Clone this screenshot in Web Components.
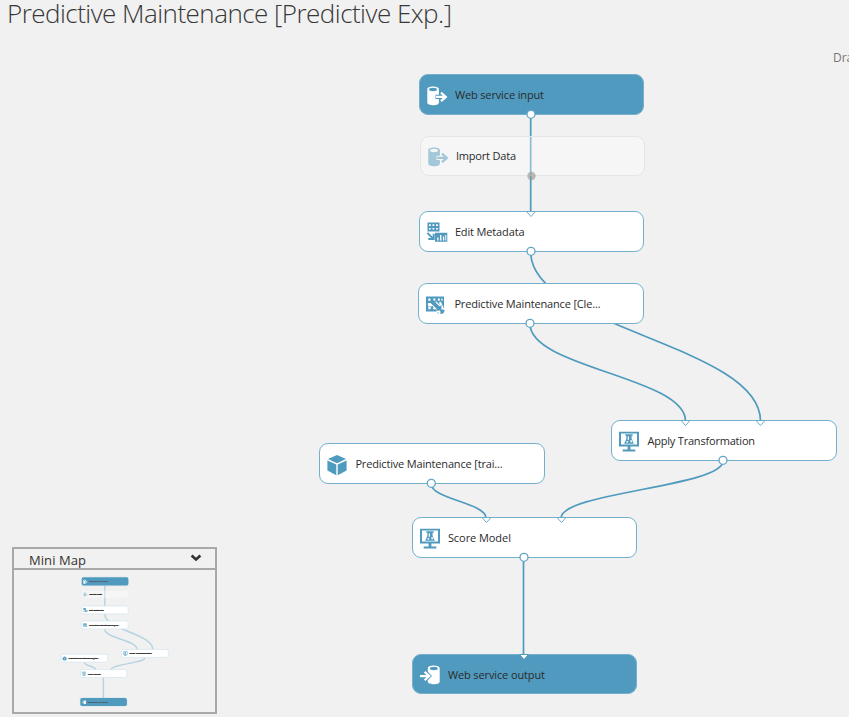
<!DOCTYPE html>
<html lang="en">
<head>
<meta charset="utf-8">
<title>Predictive Maintenance [Predictive Exp.]</title>
<style>
html,body{margin:0;height:100%;overflow:hidden;background:#f1f1f1}
</style>
</head>
<body>
<experiment-page></experiment-page>
<script>
const FONT = '"Segoe UI","Open Sans","Noto Sans",sans-serif';
const BLUE = '#4f9abe';

const ICONS = {
  input: `<path fill="currentColor" d="M.3 3.200C.3 1.500 2.900.6 6 .6s5.900.9 5.900 2.600V8.700H8.500v4.400h3.400v3.700c0 1.600-2.600 2.500-5.900 2.500S.3 18.400.3 16.800z"/><ellipse cx="6" cy="3.500" rx="4" ry="1.700" fill="var(--hole)"/><path d="M9 10.900h9.500M14 6.700l4.800 4.200-4.800 4.200" fill="none" stroke="currentColor" stroke-width="2.200"/>`,
  output: `<path fill="currentColor" d="M7.800 3.200C7.800 1.500 10.400.6 13.800.6s5.900.9 5.900 2.600v13.600c0 1.600-2.600 2.500-5.900 2.500s-6-.9-6-2.500v-1.500l4.200-4.200-4.200-4.300z"/><ellipse cx="13.800" cy="3.500" rx="4" ry="1.700" fill="var(--hole)"/><path d="M0 11.100h9M4.600 6.900l4.700 4.200-4.700 4.200" fill="none" stroke="currentColor" stroke-width="2.200"/>`,
  metadata: `<path fill="currentColor" d="M.5.6h12v9H.5zM8 10.800h12.300v9H8z"/><path fill="#fff" d="M2 2.200h1.800v1.700H2zm3.500 0h1.800v1.700H5.500zm3.500 0h1.800v1.700H9zM2 5.900h1.800v1.700H2zm3.500 0h1.800v1.700H5.500zm3.500 0h1.800v1.700H9zM10.200 15.500h1.300v3h-1.300zm2.800-2.600h1.400v5.600H13zm2.900 1.600h1.300v4h-1.300zm2.400-1.600h1v5.600h-1z"/><path d="M.4 10.900l5.400 5.500M6.700 11.800v5.300H1.300" fill="none" stroke="currentColor" stroke-width="2"/>`,
  clean: `<path fill="currentColor" d="M0 1.500h18v15H0z"/><path fill="#fff" d="M2.300 3.500h2.200v2.200H2.300zm5 0h2v2.200h-2zm4.500 0h2v2.200h-2zm3.500 0h1.200v2.200h-1.200zM2.300 12h2.400v2.300H2.300zm4.700.5h2v1.800H7zM2 8h3l2.400 2.400-2 1H2zM13 7.600l1.800-.8 1.500 3.200-2.300.8z"/><path d="M8 8.200L15 15.600" stroke="#fff" stroke-width="6"/><path d="M5.300 5.800L13.500 14" stroke="currentColor" stroke-width="3.800"/><circle cx="14.500" cy="15" r="4" fill="currentColor"/><path d="M16.300 10.500v3.200l2.900.1M10.500 16.600l2.900-.2.200 3.200" fill="none" stroke="#fff" stroke-width="1.800"/>`,
  monitor: `<path fill="currentColor" fill-rule="evenodd" d="M0 .7h20v14.800h-8.600v3.100h4.900v2H3.700v-2h4.900v-3.100H0zM2 2.600v10.900h16V2.600z"/><path fill="currentColor" d="M6.300 3.200h7.400v1.500h-1.100v3l2.200 5H5.200l2.200-5v-3H6.300z"/><path fill="#fff" d="M9 5.200h1v3.500H8.600zm2.400 3.700h1.100l.9 2.300h-2zM7.700 9.900h1.500v1.500H7.200z"/>`,
  cube: `<path fill="currentColor" d="M10 0l9 4.100-9 4.200L1 4.100zM.4 5.500l8.900 4.100v10.700L.4 15.500zM19.600 5.500l-8.900 4.100v10.700l8.900-4.800z"/>`
};

const NODES = [
  {x:418.500,y:74.200,label:'Web service input',w:89,icon:'input',kind:'service',outs:[112],iy:1},
  {x:419.500,y:135.700,label:'Import Data',w:60,icon:'input',kind:'ghost',outs:[111.500],iy:1},
  {x:418.500,y:211,label:'Edit Metadata',w:69.500,ty:1,icon:'metadata',ins:[112],outs:[112],iy:1},
  {x:418,y:283.300,label:'Predictive Maintenance [Cle...',w:146,icon:'clean',outs:[112],iy:1},
  {x:611,y:420,label:'Apply Transformation',w:107.500,ty:1,icon:'monitor',ins:[74.500,149.500],outs:[112],iy:1},
  {x:319,y:443.300,label:'Predictive Maintenance [trai...',w:147,icon:'cube',outs:[112.300],iy:1},
  {x:411.500,y:517,label:'Score Model',mini:'Train Model',w:63,ty:1,icon:'monitor',ins:[74.500,149.500],outs:[112],iy:1},
  {x:411.500,y:653.800,label:'Web service output',w:97,ty:1,icon:'output',kind:'service',ins:[112],iy:1}
];
const EDGES = [
  [530.7,115,530.7,212],[530.7,252,760.500,421],[530,324,685.500,421],
  [723,461,561,518],[431.300,484,486,518],[523.500,558,523.500,655]
];

class FitText extends HTMLElement {
  connectedCallback() {
    this.attachShadow({mode:'open'}).innerHTML =
      `<style>:host{display:inline-block;white-space:pre}span{display:inline-block}</style><span><slot></slot></span>`;
    const span = this.shadowRoot.querySelector('span');
    const scale = +this.getAttribute('scale') || 1;
    const natural = span.getBoundingClientRect().width / scale;
    span.style.letterSpacing = (+this.getAttribute('width') - natural) / this.textContent.length + 'px';
  }
}
customElements.define('fit-text', FitText);

class ModuleNode extends HTMLElement {
  connectedCallback() {
    const n = NODES[+this.getAttribute('index')];
    const mini = this.hasAttribute('mini');
    const ghost = n.kind === 'ghost', service = n.kind === 'service';
    this.style.left = n.x + 'px';
    this.style.top = n.y + 'px';
    const port = x => ghost
      ? `<circle cx="${x}" cy="40" r="4.200" fill="#999" fill-opacity=".65"/>`
      : `<circle cx="${x}" cy="40.300" r="4" fill="#fff" stroke="#62a5c5" stroke-width="1.300"/>`;
    const arrow = x => `<path d="M${x-4.500} .5h9l-4.500 5z" fill="#fff" stroke="${service ? BLUE : '#6aaac9'}" stroke-width="1"/>`;
    this.attachShadow({mode:'open'}).innerHTML = `<style>
      :host{position:absolute;display:block;width:225.500px;height:40.700px;
        --hole:${service ? BLUE : '#f5f5f5'}}
      .box{box-sizing:border-box;width:100%;height:100%;display:flex;align-items:center;
        padding-left:7.400px;border-radius:9px;
        border:${mini && !service && !ghost ? '3px solid #cde3ee' : `1px solid ${ghost ? '#e5e5e5' : '#74afcc'}`};
        ${mini && !service && !ghost ? 'padding-left:5.400px;' : ''}
        background:${service ? BLUE : ghost ? 'rgba(255,255,255,.35)' : '#fff'}}
      .icon{width:20px;height:21px;flex:none;margin-top:${2 + (n.iy||0)}px;overflow:visible;
        color:${service ? '#fff' : BLUE};opacity:${ghost ? .5 : 1}}
      fit-text{margin-left:8px;position:relative;top:${n.ty||0}px;font:${mini ? 700 : 400} 11px/16px ${FONT};
        color:${service && mini ? '#493f3c' : '#2b2b2b'};${mini ? `-webkit-text-stroke:${service ? .4 : 1.200}px ${service ? '#64585a' : '#222'}` : ''}}
      .ports{position:absolute;left:0;top:0;width:100%;height:100%;overflow:visible}
    </style>
    <div class="box"><svg class="icon" viewBox="0 0 20 21">${ICONS[n.icon]}</svg>
    <fit-text width="${n.w}" scale="${mini ? .208 : 1}">${mini && n.mini || n.label}</fit-text></div>
    <svg class="ports">${mini ? '' : (n.outs||[]).map(port).join('') + (n.ins||[]).map(arrow).join('')}</svg>`;
  }
}
customElements.define('module-node', ModuleNode);

class ExperimentGraph extends HTMLElement {
  connectedCallback() {
    const mini = this.hasAttribute('mini');
    const paths = EDGES.map(([a,b,c,d]) => {
      const k = (d - b) * .45;
      return `<path d="M${a} ${b}C${a} ${b+k} ${c} ${d-k} ${c} ${d}"/>`;
    }).join('');
    this.attachShadow({mode:'open'}).innerHTML = `<style>
      :host{display:block;position:relative;width:849px;height:717px}
      .edges{position:absolute;inset:0;width:849px;height:717px;fill:none;
        stroke:${mini ? '#b5d3e1' : BLUE};stroke-width:${mini ? 7 : 1.700}}
    </style><svg class="edges">${paths}</svg>` +
    NODES.map((n,i) => `<module-node index="${i}" ${mini ? 'mini' : ''}></module-node>`).join('');
  }
}
customElements.define('experiment-graph', ExperimentGraph);

class MiniMap extends HTMLElement {
  connectedCallback() {
    this.attachShadow({mode:'open'}).innerHTML = `<style>
      :host{display:flex;flex-direction:column;box-sizing:border-box;width:205px;height:167px;
        border:2px solid #a9a9a9;background:#f1f1f1;overflow:hidden}
      header{flex:none;display:flex;align-items:center;justify-content:space-between;height:19px;
        padding:0 13px 0 15px;border-bottom:2px solid #a9a9a9;font:13px/18px ${FONT};color:#333}
      header svg{width:12px;height:8px;margin-top:-1px}
      fit-text{margin-top:2px}
      .view{flex:1;overflow:hidden;position:relative}
      experiment-graph{transform-origin:0 0;transform:translate(-19.500px,-8.200px) scale(.208)}
    </style>
    <header><fit-text width="57">Mini Map</fit-text>
    <svg viewBox="0 0 12 8"><path d="M1.600 1.500l4.400 3.900 4.400-3.900" fill="none" stroke="#333" stroke-width="2.700"/></svg></header>
    <div class="view"><experiment-graph mini></experiment-graph></div>`;
  }
}
customElements.define('mini-map', MiniMap);

class ExperimentPage extends HTMLElement {
  connectedCallback() {
    this.attachShadow({mode:'open'}).innerHTML = `<style>
      :host{display:block;position:relative;width:849px;height:717px;overflow:hidden;background:#f1f1f1;font-family:${FONT}}
      h1{position:absolute;left:7px;top:0;margin:0;font:300 26px/26px ${FONT};color:#383838}
      .status{position:absolute;left:833px;top:50px;font:12px/16px ${FONT};color:#777;white-space:nowrap}
      mini-map{position:absolute;left:12px;top:547px}
    </style>
    <experiment-graph></experiment-graph>
    <h1><fit-text width="444.500">Predictive Maintenance [Predictive Exp.]</fit-text></h1>
    <div class="status">Dra</div>
    <mini-map></mini-map>`;
  }
}
customElements.define('experiment-page', ExperimentPage);
</script>
</body>
</html>
